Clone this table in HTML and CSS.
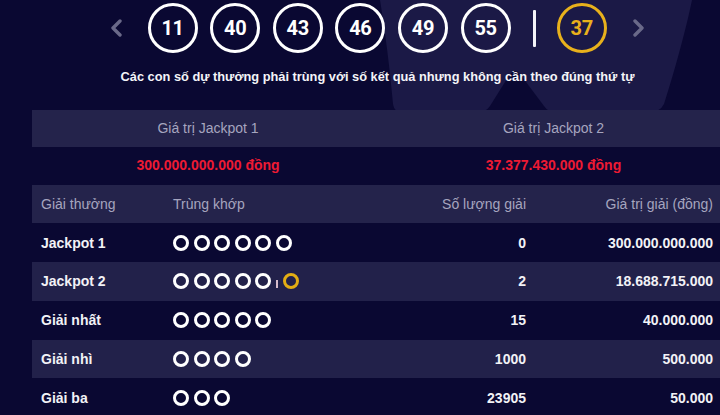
FILE: index.html
```html
<!DOCTYPE html>
<html lang="vi">
<head>
<meta charset="utf-8">
<title>Kết quả Power 6/55</title>
<link rel="stylesheet" href="styles.css">
</head>
<body>
<svg class="bg-shape" width="720" height="112" viewBox="0 0 720 112" aria-hidden="true">
  <path d="M380,0 L692,0 C686,30 672,80 664,104 Q660,112 650,112 L555,112 Q548,112 544,106 L520,74 Q515,68 510,74 L490,106 Q486,112 478,112 L402,112 Q394,112 393,104 C390,70 385,30 380,0 Z" fill="#1b1946"/>
</svg>
<main class="wrap">
  <div class="balls">
    <svg class="arrow" width="13" height="18" viewBox="0 0 13 18"><path d="M10 2 L3 9 L10 16" fill="none" stroke="#6a6989" stroke-width="3.4" stroke-linecap="round" stroke-linejoin="round"/></svg>
    <span class="ball">11</span>
    <span class="ball">40</span>
    <span class="ball">43</span>
    <span class="ball">46</span>
    <span class="ball">49</span>
    <span class="ball">55</span>
    <span class="sep"></span>
    <span class="ball ball-gold">37</span>
    <svg class="arrow arrow-r" width="13" height="18" viewBox="0 0 13 18"><path d="M3 2 L10 9 L3 16" fill="none" stroke="#6a6989" stroke-width="3.4" stroke-linecap="round" stroke-linejoin="round"/></svg>
  </div>
  <p class="caption">Các con số dự thưởng phải trùng với số kết quả nhưng không cần theo đúng thứ tự</p>

  <div class="jackpots">
    <div class="jp-head">Giá trị Jackpot 1</div>
    <div class="jp-head">Giá trị Jackpot 2</div>
    <div class="jp-val">300.000.000.000 đồng</div>
    <div class="jp-val">37.377.430.000 đồng</div>
  </div>

  <div class="prizes">
    <div class="row row-head">
      <div class="c1">Giải thưởng</div>
      <div class="c2">Trùng khớp</div>
      <div class="c3">Số lượng giải</div>
      <div class="c4">Giá trị giải (đồng)</div>
    </div>
    <div class="row">
      <div class="c1">Jackpot 1</div>
      <div class="c2"><i class="ring"></i><i class="ring"></i><i class="ring"></i><i class="ring"></i><i class="ring"></i><i class="ring"></i></div>
      <div class="c3">0</div>
      <div class="c4">300.000.000.000</div>
    </div>
    <div class="row row-alt">
      <div class="c1">Jackpot 2</div>
      <div class="c2"><i class="ring"></i><i class="ring"></i><i class="ring"></i><i class="ring"></i><i class="ring"></i><i class="mini-sep"></i><i class="ring ring-gold"></i></div>
      <div class="c3">2</div>
      <div class="c4">18.688.715.000</div>
    </div>
    <div class="row">
      <div class="c1">Giải nhất</div>
      <div class="c2"><i class="ring"></i><i class="ring"></i><i class="ring"></i><i class="ring"></i><i class="ring"></i></div>
      <div class="c3">15</div>
      <div class="c4">40.000.000</div>
    </div>
    <div class="row row-alt">
      <div class="c1">Giải nhì</div>
      <div class="c2"><i class="ring"></i><i class="ring"></i><i class="ring"></i><i class="ring"></i></div>
      <div class="c3">1000</div>
      <div class="c4">500.000</div>
    </div>
    <div class="row">
      <div class="c1">Giải ba</div>
      <div class="c2"><i class="ring"></i><i class="ring"></i><i class="ring"></i></div>
      <div class="c3">23905</div>
      <div class="c4">50.000</div>
    </div>
  </div>
</main>
</body>
</html>
```

FILE: styles.css
```css
* { box-sizing: border-box; }

html, body {
  margin: 0;
  padding: 0;
  background: #0a0832;
  overflow: hidden;
  width: 720px;
  height: 415px;
}

body {
  position: relative;
  font-family: "Liberation Sans", Arial, sans-serif;
  color: #f2f2f6;
}

.bg-shape {
  position: absolute;
  left: 0;
  top: 0;
  z-index: 0;
}

.wrap {
  position: relative;
  z-index: 1;
  margin-left: 32px;
  width: 691px;
}

.balls {
  display: flex;
  align-items: center;
  padding-top: 3px;
  padding-left: 78px;
  height: 53px;
  gap: 12.6px;
}

.arrow { flex: none; margin-right: 12px; }
.arrow-r { margin-left: 13px; margin-right: 0; }

.ball {
  flex: none;
  width: 50px;
  height: 50px;
  border-radius: 50%;
  border: 3px solid #ffffff;
  display: flex;
  align-items: center;
  justify-content: center;
  font-family: Roboto, "Liberation Sans", sans-serif;
  font-weight: 700;
  font-size: 20px;
  color: #ffffff;
  letter-spacing: -0.3px;
}

.ball-gold {
  border-color: #e8b11c;
  color: #e8b11c;
}

.sep {
  flex: none;
  width: 3px;
  height: 37px;
  background: #f4f4f8;
  margin: 0 8px 0 10px;
  border-radius: 1px;
}

.caption {
  margin: 16px 0 25px;
  line-height: 16px;
  font-size: 12.8px;
  font-weight: 700;
  text-align: center;
  color: #f4f4f8;
}

.jackpots {
  display: grid;
  grid-template-columns: 352px 1fr;
  grid-template-rows: 37px 38px;
  text-align: center;
}

.jp-head {
  background: #24234b;
  color: #a6a5bf;
  font-size: 14px;
  line-height: 37px;
}

.jp-val {
  color: #ee1a33;
  font-weight: 700;
  font-size: 14px;
  line-height: 36px;
}

.prizes { display: flex; flex-direction: column; }

.row {
  display: grid;
  grid-template-columns: 132px 1fr 170px 188px;
  align-items: center;
  height: 39px;
  font-size: 14px;
  font-weight: 700;
}

.row-head {
  height: 38px;
  background: #24234b;
  color: #a6a5bf;
  font-weight: 400;
}

.row-alt { background: #22214a; height: 38.5px; }

.c1 { padding-left: 9px; }
.c2 { padding-left: 9px; display: flex; align-items: center; gap: 4.6px; }
.c3 { text-align: right; padding-right: 9px; }
.c4 { text-align: right; padding-right: 10px; }

.ring {
  display: block;
  width: 16px;
  height: 16px;
  border-radius: 50%;
  border: 3px solid #ffffff;
}

.ring-gold { border-color: #e3ad14; }

.mini-sep {
  display: block;
  width: 2px;
  height: 8px;
  margin-top: 6px;
  background: #d7bccc;
}
```
